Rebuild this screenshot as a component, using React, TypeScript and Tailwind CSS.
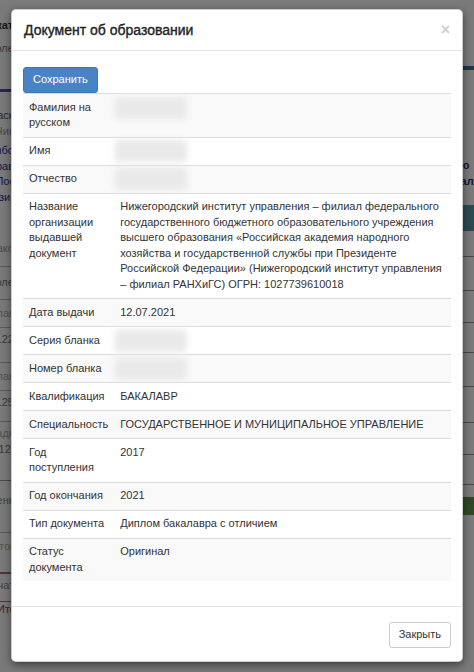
import React from "react";

type Row = { label: string; value?: string; blur?: boolean };

const rows: Row[] = [
  { label: "Фамилия на русском", blur: true },
  { label: "Имя", blur: true },
  { label: "Отчество", blur: true },
  {
    label: "Название организации выдавшей документ",
    value:
      "Нижегородский институт управления – филиал федерального государственного бюджетного образовательного учреждения высшего образования «Российская академия народного хозяйства и государственной службы при Президенте Российской Федерации» (Нижегородский институт управления – филиал РАНХиГС) ОГРН: 1027739610018",
  },
  { label: "Дата выдачи", value: "12.07.2021" },
  { label: "Серия бланка", blur: true },
  { label: "Номер бланка", blur: true },
  { label: "Квалификация", value: "БАКАЛАВР" },
  { label: "Специальность", value: "ГОСУДАРСТВЕННОЕ И МУНИЦИПАЛЬНОЕ УПРАВЛЕНИЕ" },
  { label: "Год поступления", value: "2017" },
  { label: "Год окончания", value: "2021" },
  { label: "Тип документа", value: "Диплом бакалавра с отличием" },
  { label: "Статус документа", value: "Оригинал" },
];

function Background() {
  return (
    <div className="absolute inset-0 text-[11px] leading-[15.5px] text-[#333]">
      <div className="flex justify-between">
        {/* left fragment */}
        <div className="-ml-[40px] w-[60px] flex flex-col">
          <div className="h-[18px]" />
          <div className="font-bold text-right">Искать</div>
          <div className="h-[7px]" />
          <div className="text-right text-[#777]">Более</div>
          <div className="h-[33px]" />
          <div className="h-[3px] bg-[#5a4fb0]" />
          <div className="h-[16px]" />
          <div className="text-right text-[#555]">Маска</div>
          <div className="text-right text-[#999]">Нико</div>
          <div className="h-[4px]" />
          <div className="text-right text-[#2a2f9e]">Выбор</div>
          <div className="text-right text-[#2a2f9e]">Права</div>
          <div className="text-right text-[#2a2f9e]">Пост</div>
          <div className="text-right text-[#2a2f9e]">Связи F</div>
          <div className="h-[36px]" />
          <div className="text-right text-[#999]">Закон</div>
          <div className="h-[10px] border-b border-[#bbb]" />
          <div className="h-[8px]" />
          <div className="text-right text-[#777]">Более</div>
          <div className="h-[10px] border-b border-[#bbb]" />
          <div className="h-[6px]" />
          <div className="text-right text-[#aaa]">Бланк</div>
          <div className="h-[6px] border-b border-[#bbb]" />
          <div className="h-[4px]" />
          <div className="text-right text-[#777]">1224</div>
          <div className="h-[16px] border-b border-[#bbb]" />
          <div className="h-[6px]" />
          <div className="text-right text-[#aaa]">Бланк</div>
          <div className="h-[6px] border-b border-[#bbb]" />
          <div className="h-[4px]" />
          <div className="text-right text-[#777]">1250</div>
          <div className="h-[12px] border-b border-[#bbb]" />
          <div className="h-[4px]" />
          <div className="text-right text-[#aaa]">Вкладка</div>
          <div className="text-right text-[#777]">12.2</div>
          <div className="h-[24px] border-b border-[#999]" />
          <div className="h-[12px]" />
          <div className="text-right text-[#888]">Оценка</div>
          <div className="h-[24px] border-b border-[#bbb]" />
          <div className="h-[6px]" />
          <div className="text-right text-[#aaa]">Итого</div>
          <div className="h-[20px] border-b-2 border-[#b86a7a]" />
          <div className="h-[4px]" />
          <div className="text-right text-[#888]">Печать</div>
          <div className="h-[8px] border-b border-[#b86a7a]" />
          <div className="text-right text-[#a33]">Итог</div>
        </div>
        {/* right fragment */}
        <div className="-mr-[40px] w-[60px] flex flex-col">
          <div className="h-[66px]" />
          <div className="h-[4px] bg-[#4a6f99]" />
          <div className="h-[88px]" />
          <div className="text-[#2a2f6e] font-bold">ую</div>
          <div className="text-[#2a2f6e] font-bold">вал</div>
          <div className="h-[16px]" />
          <div className="h-[26px] bg-[#5a9bb0] rounded-[3px]" />
          <div className="h-[26px] border-b border-[#999]" />
          <div className="h-[34px] border-b border-[#999]" />
          <div className="h-[32px] border-b border-[#999]" />
          <div className="h-[30px] border-b border-[#999]" />
          <div className="h-[34px] border-b border-[#999]" />
          <div className="h-[36px] border-b border-[#999]" />
          <div className="h-[32px] border-b border-[#999]" />
          <div className="h-[30px] border-b border-[#999]" />
          <div className="h-[12px]" />
          <div className="h-[18px] bg-[#5e9a4a] rounded-[2px]" />
        </div>
      </div>
    </div>
  );
}

export default function App() {
  return (
    <div className="relative w-[474px] h-[672px] overflow-hidden bg-white font-['Liberation_Sans',Arial,sans-serif]">
      <Background />
      <div className="absolute inset-0 bg-black/[0.52]" />
      <div className="absolute left-[11px] top-[9px] w-[452px] bg-white rounded-[5px] border border-black/20 shadow-[0_3px_9px_rgba(0,0,0,0.5)] text-[#333] text-[11px] leading-[15.5px]">
        {/* header */}
        <div className="flex items-center justify-between px-[12px] h-[41px] border-b border-[#e5e5e5]">
          <h4 className="text-[14px] font-normal text-[#222] leading-[17px] [-webkit-text-stroke:0.35px_#222]">
            Документ об образовании
          </h4>
          <span className="text-[16px] font-bold text-[#cfcfcf] leading-none -mt-[1px]">×</span>
        </div>
        {/* body */}
        <div className="px-[11px] pt-[16px] pb-[25px]">
          <button className="h-[26px] px-[9px] rounded-[3px] bg-[#4884c5] border border-[#3d75b3] text-white text-[11px] leading-[15.5px]">
            Сохранить
          </button>
          <table className="w-full border-collapse">
            <tbody>
              {rows.map((r, i) => (
                <tr key={i} className={i % 2 === 0 ? "bg-[#f9f9f9]" : "bg-white"}>
                  <td className="w-[89px] align-top px-[6px] py-[5.75px] border-t border-[#dddddd]">
                    {r.label}
                  </td>
                  <td className="align-top px-[6px] py-[5.75px] border-t border-[#dddddd]">
                    {r.blur ? (
                      <div className="relative h-[15.5px]">
                        <div className="absolute -left-[5px] -top-[3px] w-[72px] h-[22px] bg-[#e9e9e9] blur-[3px] rounded-[3px]" />
                      </div>
                    ) : (
                      r.value
                    )}
                  </td>
                </tr>
              ))}
            </tbody>
          </table>
        </div>
        {/* footer */}
        <div className="flex justify-end px-[11px] pt-[15px] pb-[13px] border-t border-[#e5e5e5]">
          <button className="h-[26px] px-[9px] rounded-[3px] bg-white border border-[#cccccc] text-[#333] text-[11px] leading-[15.5px]">
            Закрыть
          </button>
        </div>
      </div>
    </div>
  );
}
